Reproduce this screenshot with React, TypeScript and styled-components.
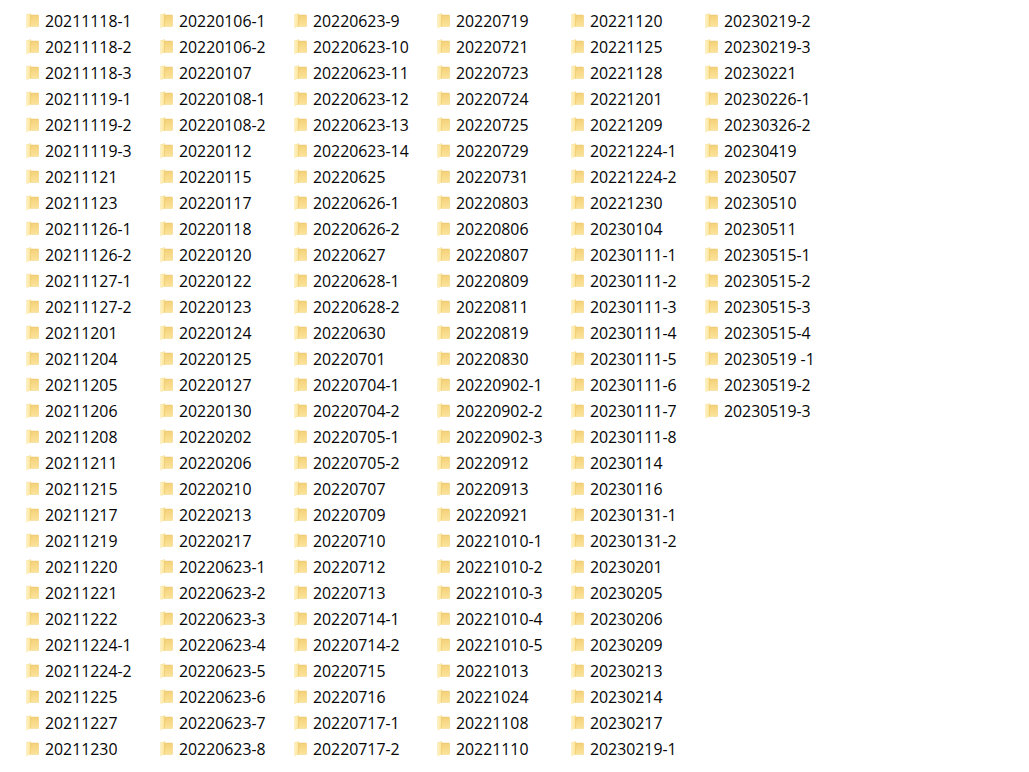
import React from "react";
import styled, { createGlobalStyle } from "styled-components";

const Global = createGlobalStyle`
  html, body { margin: 0; padding: 0; background: #fff; }
  body { font-family: "Open Sans", "Noto Sans", "Liberation Sans", sans-serif; }
`;

const Page = styled.div`
  width: 1029px;
  height: 772px;
  overflow: hidden;
  display: flex;
  align-items: flex-start;
  padding: 8px 0 0 26px;
  box-sizing: border-box;
  background: #fff;
`;

const Column = styled.ul<{ $width: number }>`
  list-style: none;
  margin: 0;
  padding: 0;
  width: ${(p) => p.$width}px;
  flex: none;
  display: flex;
  flex-direction: column;
`;

const Row = styled.li`
  height: 26px;
  display: flex;
  align-items: center;
  gap: 6px;
`;

const Name = styled.span`
  font-size: 15.85px;
  color: #050505;
  white-space: nowrap;
  line-height: 26px;
`;

const FolderSvg = styled.svg`
  width: 13px;
  height: 16px;
  flex: none;
  margin-top: -1px;
`;

const FolderDefs = () => (
  <svg width="0" height="0" style={{ position: "absolute" }} aria-hidden="true">
    <defs>
      <linearGradient id="folderBody" x1="0" y1="0" x2="0" y2="1">
        <stop offset="0" stopColor="#f5d27a" />
        <stop offset="1" stopColor="#fbe39a" />
      </linearGradient>
      <linearGradient id="folderFlap" x1="0" y1="0" x2="1" y2="0">
        <stop offset="0" stopColor="#fef3c8" />
        <stop offset="1" stopColor="#fbe293" />
      </linearGradient>
    </defs>
  </svg>
);

const FolderIcon = () => (
  <FolderSvg viewBox="0 0 13 16" aria-hidden="true">
    <path d="M0.5 1.6 L5 0.5 L5 1.8 L12.2 1.8 L12.6 2.2 L12.6 13.4 L0.5 13.4 Z" fill="#eac873" />
    <path d="M5.5 2.6 L12.6 2.6 L12.6 13.4 L4.5 13.4 Z" fill="url(#folderBody)" />
    <path d="M0.2 1.8 L5 0.5 L5 12.9 L0.2 15.8 Z" fill="url(#folderFlap)" />
    <path d="M5 1.6 L5 12.9 L4.2 13.4 L4.2 1.9 Z" fill="#f0cc70" />
  </FolderSvg>
);

const columns: { width: number; names: string[] }[] = [
  { width: 134, names: ["20211118-1","20211118-2","20211118-3","20211119-1","20211119-2","20211119-3","20211121","20211123","20211126-1","20211126-2","20211127-1","20211127-2","20211201","20211204","20211205","20211206","20211208","20211211","20211215","20211217","20211219","20211220","20211221","20211222","20211224-1","20211224-2","20211225","20211227","20211230"] },
  { width: 134, names: ["20220106-1","20220106-2","20220107","20220108-1","20220108-2","20220112","20220115","20220117","20220118","20220120","20220122","20220123","20220124","20220125","20220127","20220130","20220202","20220206","20220210","20220213","20220217","20220623-1","20220623-2","20220623-3","20220623-4","20220623-5","20220623-6","20220623-7","20220623-8"] },
  { width: 143, names: ["20220623-9","20220623-10","20220623-11","20220623-12","20220623-13","20220623-14","20220625","20220626-1","20220626-2","20220627","20220628-1","20220628-2","20220630","20220701","20220704-1","20220704-2","20220705-1","20220705-2","20220707","20220709","20220710","20220712","20220713","20220714-1","20220714-2","20220715","20220716","20220717-1","20220717-2"] },
  { width: 134, names: ["20220719","20220721","20220723","20220724","20220725","20220729","20220731","20220803","20220806","20220807","20220809","20220811","20220819","20220830","20220902-1","20220902-2","20220902-3","20220912","20220913","20220921","20221010-1","20221010-2","20221010-3","20221010-4","20221010-5","20221013","20221024","20221108","20221110"] },
  { width: 134, names: ["20221120","20221125","20221128","20221201","20221209","20221224-1","20221224-2","20221230","20230104","20230111-1","20230111-2","20230111-3","20230111-4","20230111-5","20230111-6","20230111-7","20230111-8","20230114","20230116","20230131-1","20230131-2","20230201","20230205","20230206","20230209","20230213","20230214","20230217","20230219-1"] },
  { width: 134, names: ["20230219-2","20230219-3","20230221","20230226-1","20230326-2","20230419","20230507","20230510","20230511","20230515-1","20230515-2","20230515-3","20230515-4","20230519 -1","20230519-2","20230519-3"] },
];

export default function App() {
  return (
    <>
      <Global />
      <FolderDefs />
      <Page>
        {columns.map((c) => (
          <Column key={c.names[0]} $width={c.width}>
            {c.names.map((n) => (
              <Row key={n}>
                <FolderIcon />
                <Name>{n}</Name>
              </Row>
            ))}
          </Column>
        ))}
      </Page>
    </>
  );
}
